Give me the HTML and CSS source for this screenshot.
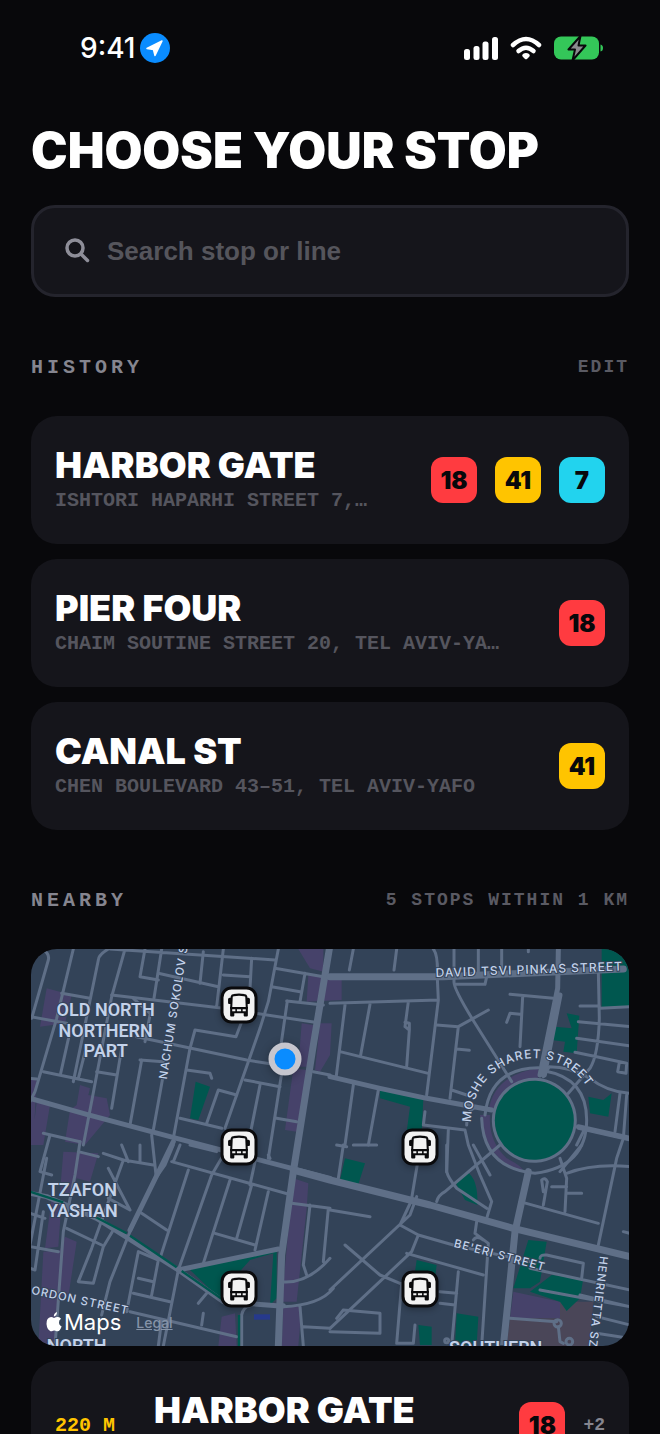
FILE: index.html
```html
<!DOCTYPE html>
<html lang="en">
<head>
    <meta charset="UTF-8">
    <meta name="viewport" content="width=device-width, initial-scale=1.0">
    <title>Choose your stop</title>
    <link rel="stylesheet" href="styles.css">
</head>
<body>
    <div class="status-bar">
        <div class="status-time">
            <span>9:41</span>
            <svg class="location-icon" viewBox="0 0 30 30" aria-hidden="true">
                <circle cx="15" cy="15" r="15" fill="#0a8cff"/>
                <path d="M22 8 L15 22.500 L13.500 16.500 L7 15.500 Z" fill="#fff" stroke="#fff" stroke-width="1.500" stroke-linejoin="round"/>
            </svg>
        </div>
        <div class="status-icons">
            <svg width="34" height="24" viewBox="0 0 34 24" aria-hidden="true" fill="#fff">
                <rect x="0" y="13" width="6" height="11" rx="2.500"/>
                <rect x="9.500" y="10" width="6" height="14" rx="2.500"/>
                <rect x="18.500" y="5.500" width="6" height="18.500" rx="2.500"/>
                <rect x="28" y="1" width="6" height="23" rx="2.500"/>
            </svg>
            <svg width="32" height="24" viewBox="0 0 32 24" aria-hidden="true" fill="none" stroke="#fff" stroke-width="4.500" stroke-linecap="round">
                <path d="M3 9 Q16 -3 29 9"/>
                <path d="M8.500 15 Q16 8.500 23.500 15"/>
                <path d="M16 21.500 L14 19.500 Q16 18 18 19.500 Z" fill="#fff" stroke-width="3.500" stroke-linejoin="round"/>
            </svg>
            <svg width="50" height="26" viewBox="0 0 50 26" aria-hidden="true">
                <rect x="0" y="1.500" width="45" height="23" rx="7" fill="#34c759"/>
                <path d="M46.500 9.500 Q49 10 49 13 Q49 16 46.500 16.500 Z" fill="#34c759"/>
                <path d="M26.500 1 L14.500 14.500 H21 L18.500 25.500 L31.500 10.500 H24.500 Z" fill="#8a8a8e" stroke="#08080b" stroke-width="2" stroke-linejoin="round"/>
            </svg>
        </div>
    </div>

    <main class="page">
        <h1>CHOOSE YOUR STOP</h1>

        <label class="search">
            <svg class="search-icon" viewBox="0 0 26 26" aria-hidden="true" fill="none" stroke="#8e8e99" stroke-width="3.500" stroke-linecap="round">
                <circle cx="10" cy="10" r="8"/>
                <path d="M16 16 L22.500 22.500"/>
            </svg>
            <input type="search" placeholder="Search stop or line" aria-label="Search stop or line">
        </label>

        <div class="section-head">
            <h2>HISTORY</h2>
            <button class="edit-btn" type="button">EDIT</button>
        </div>

        <div class="stop-list">
            <article class="stop-card">
                <div class="stop-info">
                    <h3>HARBOR GATE</h3>
                    <p>ISHTORI HAPARHI STREET 7,…</p>
                </div>
                <div class="lines">
                    <span class="badge red">18</span>
                    <span class="badge yellow">41</span>
                    <span class="badge cyan">7</span>
                </div>
            </article>
            <article class="stop-card">
                <div class="stop-info">
                    <h3>PIER FOUR</h3>
                    <p>CHAIM SOUTINE STREET 20, TEL AVIV-YA…</p>
                </div>
                <div class="lines">
                    <span class="badge red">18</span>
                </div>
            </article>
            <article class="stop-card">
                <div class="stop-info">
                    <h3>CANAL ST</h3>
                    <p>CHEN BOULEVARD 43–51, TEL AVIV-YAFO</p>
                </div>
                <div class="lines">
                    <span class="badge yellow">41</span>
                </div>
            </article>
        </div>

        <div class="section-head">
            <h2>NEARBY</h2>
            <span class="section-note">5 STOPS WITHIN 1 KM</span>
        </div>

        <div class="stop-list">
            <div class="map">
                <svg class="map-canvas" viewBox="3 12 1794 1191" preserveAspectRatio="xMidYMid slice" role="img" aria-label="Map of nearby stops">
                    <rect class="land" x="0" y="0" width="1800" height="1220"/>

                    <!-- built-up blocks -->
                    <g class="block">
                        <path d="M50 130 L125 150 L105 235 L30 245 Z"/>
                        <path d="M0 400 L20 400 L10 600 L0 600 Z M20 470 L60 480 L40 600 L5 600 Z"/>
                        <path d="M150 420 L180 430 L175 450 L230 460 L240 510 L165 600 L105 590 L120 495 L140 480 Z"/>
                        <path d="M805 12 H880 V80 L840 70 Z M835 90 L935 90 V165 L830 170 Z"/>
                        <path d="M815 235 L850 240 L835 365 L805 365 Z M870 235 H905 L900 330 L870 380 L855 375 Z"/>
                        <path d="M790 370 L830 375 L800 560 L765 555 Z"/>
                        <path d="M100 620 L205 625 L180 710 L140 700 L125 755 L90 740 Z"/>
                        <path d="M65 760 L95 765 L85 905 L45 910 Z M105 875 L140 890 L115 1055 H85 L75 1203 H25 L40 920 L90 915 Z"/>
                        <path d="M790 700 L835 715 L830 790 L800 1070 H755 Z M760 1085 H815 L805 1203 H755 Z M575 1115 L615 1105 L620 1203 H565 Z"/>
                        <path d="M1375 500 Q1390 390 1525 370 L1525 400 Q1420 410 1400 500 Z M1350 510 H1380 Q1375 590 1430 640 Q1480 665 1480 680 Q1370 650 1350 510 Z"/>
                        <path d="M1450 1040 L1590 1070 V1120 H1440 Z"/>
                    </g>
                    <path class="campus" d="M1590 1070 L1690 1070 L1680 1203 H1430 L1440 1120 H1590 Z"/>

                    <!-- parks -->
                    <g class="park">
                        <path d="M497 410 L540 425 L505 525 L480 520 Z"/>
                        <circle cx="1513" cy="524" r="124"/>
                        <path d="M1715 12 H1800 V185 L1715 188 Z M1610 205 L1648 212 L1640 325 L1600 320 L1605 290 L1565 285 L1575 245 L1625 250 Z"/>
                        <path d="M1675 455 L1720 465 L1745 445 L1735 515 L1680 505 Z"/>
                        <path d="M1050 435 L1180 462 L1175 560 H1130 L1140 485 L1050 460 Z"/>
                        <path d="M945 640 L1005 655 L985 718 L930 705 Z M1310 680 Q1345 700 1342 780 L1305 765 L1275 710 Z"/>
                        <path d="M1495 885 L1550 890 L1530 1010 L1500 1030 L1450 1030 Z M1565 990 L1660 1000 L1650 1060 L1610 1098 L1590 1070 L1500 1040 Z"/>
                        <path d="M1160 945 L1220 960 L1215 1000 L1155 980 Z M1280 1105 L1345 1115 L1340 1200 H1275 Z M1165 1140 L1205 1145 V1200 H1170 Z"/>
                        <path d="M475 970 L740 915 V1060 L720 1080 L730 925 L660 945 L620 990 L580 1070 Z"/>
                    </g>
                    <rect class="station" x="672" y="1108" width="48" height="16"/>

                    <g class="road">
                        <!-- north west -->
                        <path d="M35 12 Q60 25 55 45 L5 220 M130 12 L80 220 L15 440 L0 470 M235 12 Q205 30 205 45 L130 410 M285 12 L245 155 L160 600 M345 12 L330 95 L385 105 M395 12 L372 160 M240 12 L735 45"/>
                        <path d="M95 145 L180 160 M245 150 L580 190 L855 232 M0 215 L110 235 M520 20 L510 115 M580 12 L560 185 M385 85 L565 125 M580 90 L660 95 M665 40 L660 130"/>
                        <path d="M745 12 L715 170 L690 250 L655 350 L585 550 M735 70 L880 95 M725 125 L810 140 M825 85 L810 170 M770 168 L880 180 M772 168 L750 320 M635 230 L618 275 L495 255 L480 310 L430 580"/>
                        <path d="M320 275 L650 345 L730 358 M470 375 L540 385 L545 400 M40 380 L185 410 M120 260 L92 385 M168 310 L145 400 M200 380 L260 390 M275 310 L245 490 M335 345 L300 540 M330 345 L400 350 M398 400 L370 555"/>
                        <path d="M450 520 L575 550 M530 535 L565 435 L620 450 M645 405 L750 425 M690 420 L660 570 M755 385 L715 640 M740 520 L800 530 M850 380 L900 390 M0 400 L20 402 M40 565 L150 590 M60 570 L30 680 L65 690 M360 210 L345 290 M310 160 L365 210"/>

                        <!-- north east -->
                        <path d="M970 12 L958 75 M1100 12 L1092 75 M1210 12 Q1225 30 1222 100 L1225 165 L1190 450 M900 175 L1225 165 M945 180 L918 400 M1020 178 L992 330 M1135 170 L1125 245 L1138 255 L1130 365 M1138 255 V235 L1125 232 M930 320 L1195 385"/>
                        <path d="M1272 12 V110 Q1270 130 1335 235 L1445 410 M1275 118 H1365 L1370 95 M1345 12 V80 M1415 12 V80 M1495 12 V20 M1220 240 L1285 245 L1375 195 M1285 245 L1260 460 M1280 312 L1318 316 M1265 435 L1310 450"/>
                        <path d="M1440 148 L1570 160 M1478 155 L1470 305 M1470 208 L1440 205 L1430 232 M1705 80 L1708 220 Q1705 330 1680 370 L1615 445 M1650 183 H1708 M1710 190 L1800 185 M1645 230 L1800 245 M1640 280 L1800 303 M1635 322 L1700 335 L1790 355 L1788 385 L1763 380 L1768 352 M1540 395 L1558 365 Q1620 365 1680 400 Q1730 440 1800 445"/>
                        <path d="M1365 510 Q1380 370 1525 368 M1545 378 Q1670 400 1670 525 Q1670 665 1515 685 Q1360 670 1355 520 M1185 500 L1180 540 L1305 555 L1315 600 L1350 690 L1385 770 L1370 820 M1310 540 Q1310 500 1330 490 M970 420 L945 600 M1045 435 L1015 600 M1255 555 L1250 680 Q1255 700 1280 730 L1370 790"/>
                        <path d="M1390 525 A123 123 0 1 1 1390 527 M1645 550 L1800 585 M1660 560 L1640 600 M1770 445 L1755 560 M1790 450 L1780 580 L1760 640 L1705 900"/>

                        <!-- south west -->
                        <path d="M150 590 L135 690 L100 860 L75 1203 M220 625 L280 645 L370 660 M275 600 L295 650 M330 600 V650 M365 570 L378 690 M280 645 L185 910 L145 1010 L190 1015 L220 905 L250 855 M235 670 L300 795 L235 760 M145 620 L205 635 M50 640 L0 900"/>
                        <path d="M430 600 L405 660 L370 710 L300 860 L240 1010 L215 1110 M425 650 L785 750 M475 675 L390 940 M545 690 L445 975 L400 1203 M600 705 L520 955 M665 720 L620 880 M715 740 L675 915 M335 805 L410 855 M555 865 L675 900 M580 630 L545 690 M720 640 L715 630 M675 650 L660 720"/>
                        <path d="M0 805 L45 820 M110 850 L215 900 M0 905 L85 920 M0 970 L15 975 L40 800 M325 920 L290 1100 M325 920 L385 945 L365 1050 M325 1000 L370 1010 M310 1045 L420 1070 M300 1100 L620 1175 M520 1105 L515 1140 M530 1045 L505 1075 M395 1125 L385 1203 M480 600 L560 620 M450 600 L430 650"/>
                        <path d="M785 775 L900 790 M840 780 L820 960 L830 990 M895 790 L880 950 M750 1010 Q830 1020 900 940 M760 1085 Q870 1080 910 1030 M810 1085 L820 1203 M820 1145 L900 1150 M635 1203 V1110 Q640 1085 660 1082"/>

                        <!-- south east -->
                        <path d="M940 600 L925 700 M1160 755 L1140 810 L900 1035 M900 795 L1020 815 M1165 640 L1145 760 M1145 765 L1110 840 L1165 870 L1270 900 L1500 950 M1165 870 L1145 920 L900 1150 M945 900 L1050 990 L1110 1015 M1130 925 L1360 990 M920 600 L950 605 M970 600 L1040 600"/>
                        <path d="M1220 770 Q1225 750 1245 740 L1410 600 M1330 600 L1380 690 M1250 600 V680 M1340 830 L1335 865 L1375 895 L1355 1203 M1330 885 Q1340 870 1360 885 M1285 980 L1265 1200 M1230 1040 L1280 1045 M1230 1075 L1275 1080 M940 1095 L1050 1105 V1165 L900 1160 M940 1095 L920 1120 M1115 1015 L1100 1195 H1150 L1155 1140"/>
                        <path d="M1470 770 L1705 835 M1590 640 L1610 700 L1605 800 M1610 685 Q1690 655 1800 665 M1540 780 L1552 710 Q1545 695 1535 705 L1540 740 M1565 725 H1610 M1610 745 H1655 M1655 600 L1590 680 M1780 860 L1800 865"/>
                        <path d="M1530 940 Q1530 928 1550 930 L1660 955 L1655 1000 M1500 970 L1800 1035 M1530 1035 L1800 1085 M1650 1050 L1800 1085 M1700 1115 L1800 1140 M1700 1165 L1800 1180 M1440 1120 L1580 1130 M1585 1145 L1590 1190 L1600 1195"/>
                        <circle cx="1583" cy="1135" r="11"/>
                        <circle cx="1618" cy="1190" r="10"/>
                        <circle cx="1250" cy="1187" r="6"/>
                    </g>

                    <g class="road avenue">
                        <path d="M0 460 L170 508 L440 580 L900 700"/>
                        <path d="M0 745 L50 755 L200 820 L445 975 L580 1070 L740 1082 L760 1082"/>
                        <path d="M900 395 L1050 430 L1190 460 L1385 495 M445 975 L745 912 M1585 15 L1583 130 L1530 390 M1590 150 L1543 390 M1645 545 L1800 580"/>
                        <path d="M300 855 L430 590"/>
                    </g>
                    <g class="road boulevard">
                        <path d="M898 12 L885 90 L850 300 L790 680 L755 930 L745 1203"/>
                        <path d="M900 95 L1240 95 L1780 72"/>
                        <path d="M790 675 L900 705 L1200 780 L1450 850 L1800 935"/>
                        <path d="M1495 680 L1455 860 L1435 1060 L1420 1203"/>
                    </g>
                    <path class="median" d="M0 740 L100 772 M195 815 L290 865 M300 872 L440 967 M455 978 L580 1065 M627 1203 V1110"/>

                    <path id="sharet" fill="none" d="M1323 532 A190 190 0 0 1 1703 527"/>

                    <g class="area-label">
                        <text x="227" y="214">OLD NORTH</text>
                        <text x="227" y="275">NORTHERN</text>
                        <text x="227" y="336">PART</text>
                        <text x="157" y="754">TZAFON</text>
                        <text x="157" y="815">YASHAN</text>
                        <text x="140" y="1222">NORTH</text>
                        <text x="1397" y="1226">SOUTHERN</text>
                    </g>
                    <g class="street-label">
                        <text transform="translate(1217 96) rotate(-2)">DAVID TSVI PINKAS STREET</text>
                        <text><textPath href="#sharet">MOSHE SHARET STREET</textPath></text>
                    </g>
                    <g class="street-label small">
                        <text transform="translate(410 404) rotate(-81)">NACHUM SOKOLOV ST</text>
                        <text transform="translate(1270 905) rotate(15)">BE'ERI STREET</text>
                        <text transform="translate(1710 932) rotate(97)">HENRIETTA SZOLD</text>
                        <text transform="translate(2 1046) rotate(12)">ORDON STREET</text>
                    </g>
                </svg>

                <span class="me"></span>
                <button class="pin pin-1" type="button" aria-label="Bus stop"><svg viewBox="0 0 24 24"><use href="#bus"/></svg></button>
                <button class="pin pin-2" type="button" aria-label="Bus stop"><svg viewBox="0 0 24 24"><use href="#bus"/></svg></button>
                <button class="pin pin-3" type="button" aria-label="Bus stop"><svg viewBox="0 0 24 24"><use href="#bus"/></svg></button>
                <button class="pin pin-4" type="button" aria-label="Bus stop"><svg viewBox="0 0 24 24"><use href="#bus"/></svg></button>
                <button class="pin pin-5" type="button" aria-label="Bus stop"><svg viewBox="0 0 24 24"><use href="#bus"/></svg></button>

                <div class="map-credit">
                    <span class="map-brand">
                        <svg viewBox="0 0 16 20" aria-hidden="true" fill="#fff">
                            <path d="M11 0 Q11 3.800 7.800 4.600 Q7.700 1.200 11 0 Z"/>
                            <path d="M8 6 Q10 4.800 12 5 Q14 5.200 15 6.700 Q12.700 8.200 13 11 Q13.200 13.500 15.600 14.500 Q14 19 11.700 19.300 Q10.500 19.300 9.500 18.700 Q8.300 18.200 7 18.700 Q5.500 19.500 4.500 19.200 Q1 17.500 0.500 12 Q0.400 5.500 5 5 Q6.500 5 8 6 Z"/>
                        </svg>
                        Maps
                    </span>
                    <a href="#legal">Legal</a>
                </div>
            </div>

            <article class="stop-card nearby">
                <span class="distance">220 M</span>
                <div class="stop-info">
                    <h3>HARBOR GATE</h3>
                    <p>ISHTORI HAPARHI…</p>
                </div>
                <div class="lines">
                    <span class="badge red">18</span>
                    <span class="more">+2</span>
                </div>
            </article>
        </div>
    </main>

    <svg class="symbols" aria-hidden="true">
        <symbol id="bus" viewBox="0 0 24 24">
            <path d="M5 4 Q5.200 2.800 7 2.500 Q12 1.500 17 2.500 Q18.800 2.800 19 4 L19.500 15 H4.500 Z" fill="none" stroke="#0a0a0c" stroke-width="2" stroke-linejoin="round"/>
            <path d="M3.500 14 H20.500 V22 Q20.500 23 19.500 23 H17.500 Q16.500 23 16.500 22 V20 H7.500 V22 Q7.500 23 6.500 23 H4.500 Q3.500 23 3.500 22 Z" fill="#0a0a0c"/>
            <path d="M4.500 5 H3 Q1.500 5 1.500 6.500 V10 Q1.500 11 2.500 11 H4.500 Z M19.500 5 H21 Q22.500 5 22.500 6.500 V10 Q22.500 11 21.500 11 H19.500 Z" fill="#0a0a0c"/>
            <path d="M5.500 16 H8.500 V18 H5.500 Z M10 16 H14 V18 H10 Z M15.500 16 H18.500 V18 H15.500 Z" fill="#f2f2f2"/>
        </symbol>
    </svg>
</body>
</html>
```
FILE: styles.css
```css
* {
    box-sizing: border-box;
}

body {
    margin: 0;
    background-color: #08080b;
    color: #fff;
    font-family: Inter, "Liberation Sans", sans-serif;
    overflow: hidden;
    height: 100vh;
}

h1, h2, h3, p {
    margin: 0;
}

button {
    padding: 0;
    border: none;
    background: none;
    cursor: pointer;
}

.symbols {
    display: none;
}

.status-bar {
    display: flex;
    justify-content: space-between;
    align-items: center;
    height: 96px;
    padding: 0 56px 0 80px;
}

.status-time {
    display: flex;
    align-items: center;
    gap: 5px;
    font-size: 28px;
    font-weight: 500;
}

.location-icon {
    width: 30px;
    height: 30px;
}

.status-icons {
    display: flex;
    align-items: center;
    gap: 12px;
}

.page {
    padding: 23px 31px 0;
}

h1 {
    font-size: 49px;
    line-height: 64px;
    font-weight: 900;
    white-space: nowrap;
}

.search {
    display: flex;
    align-items: center;
    gap: 16px;
    height: 92px;
    margin-top: 22px;
    padding: 0 31px;
    background: #15151b;
    border: 3px solid #24242d;
    border-radius: 24px;
}

.search-icon {
    flex: none;
    width: 26px;
    height: 26px;
}

.search input {
    flex: 1;
    min-width: 0;
    padding: 0;
    border: none;
    outline: none;
    background: none;
    color: #fff;
    font-family: "Liberation Sans", Arial, sans-serif;
    font-size: 26px;
    font-weight: bold;
}

.search input::placeholder {
    color: #55555c;
    opacity: 1;
}

.section-head {
    display: flex;
    justify-content: space-between;
    align-items: center;
    height: 24px;
    margin: 58px 0 37px;
    font-family: "Liberation Mono", monospace;
}

h2 {
    font-size: 20px;
    font-weight: bold;
    letter-spacing: 4px;
    color: #85858f;
}

.edit-btn, .section-note {
    font-family: "Liberation Mono", monospace;
    font-size: 18px;
    font-weight: bold;
    letter-spacing: 2px;
    color: #5a5a63;
}

.stop-list {
    display: flex;
    flex-direction: column;
    gap: 15px;
}

.stop-card {
    display: flex;
    align-items: center;
    gap: 24px;
    min-height: 128px;
    padding: 24px;
    background: #15151b;
    border-radius: 26px;
}

.stop-info {
    flex: 1;
    min-width: 0;
    padding-bottom: 2px;
}

h3 {
    font-size: 36px;
    line-height: 44px;
    font-weight: 900;
    white-space: nowrap;
}

.stop-info p {
    font-family: "Liberation Mono", monospace;
    font-size: 20px;
    line-height: 28px;
    font-weight: bold;
    color: #55555e;
    white-space: nowrap;
    overflow: hidden;
    text-overflow: ellipsis;
}

.lines {
    display: flex;
    align-items: center;
    gap: 18px;
}

.badge {
    display: flex;
    align-items: center;
    justify-content: center;
    width: 46px;
    height: 46px;
    border-radius: 12px;
    color: #08080b;
    font-size: 24px;
    font-weight: 900;
}

.red {
    background: #ff3b40;
}

.yellow {
    background: #ffc400;
}

.cyan {
    background: #22d3ee;
}

.map {
    position: relative;
    aspect-ratio: 598 / 397;
    border-radius: 26px;
    overflow: hidden;
}

.map-canvas {
    display: block;
    width: 100%;
    height: 100%;
}

.land {
    fill: #334358;
}

.block {
    fill: #46426a;
}

.campus {
    fill: #4a4658;
}

.park {
    fill: #00574f;
}

.station {
    fill: #26398c;
}

.road {
    fill: none;
    stroke: #5f6f87;
    stroke-width: 9;
    stroke-linejoin: round;
    stroke-linecap: round;
}

.avenue {
    stroke-width: 15;
}

.boulevard {
    stroke-width: 21;
}

.median {
    fill: none;
    stroke: #00574f;
    stroke-width: 7;
}

.area-label {
    fill: #c3d2ea;
    font-family: Roboto, sans-serif;
    font-size: 54px;
    font-weight: 600;
    text-anchor: middle;
    paint-order: stroke;
    stroke: #334358;
    stroke-width: 6px;
}

.street-label {
    fill: #c3d2ea;
    font-family: Inter, sans-serif;
    font-size: 36px;
    font-weight: 500;
    letter-spacing: 3px;
    paint-order: stroke;
    stroke: #334358;
    stroke-width: 6px;
}

.street-label.small {
    font-size: 34px;
}

.me, .pin {
    position: absolute;
    transform: translate(-50%, -50%);
}

.me {
    left: 42.4%;
    top: 27.6%;
    width: 33px;
    height: 33px;
    border: 6px solid #c6c6ce;
    border-radius: 50%;
    background: #0a8cff;
    box-shadow: 0 2px 10px rgba(0, 0, 0, 0.3);
}

.pin {
    display: flex;
    align-items: center;
    justify-content: center;
    width: 37px;
    height: 37px;
    border: 3px solid #0a0a0c;
    border-radius: 11px;
    background: #f2f2f2;
    box-shadow: 0 2px 6px rgba(0, 0, 0, 0.3);
}

.pin svg {
    flex: none;
    width: 25px;
    height: 25px;
}

.pin-1 {
    left: 34.8%;
    top: 14.2%;
}

.pin-2 {
    left: 34.8%;
    top: 49.8%;
}

.pin-3 {
    left: 65%;
    top: 49.8%;
}

.pin-4 {
    left: 34.8%;
    top: 85.6%;
}

.pin-5 {
    left: 65%;
    top: 85.6%;
}

.map-credit {
    position: absolute;
    left: 15px;
    bottom: 10px;
    display: flex;
    align-items: center;
    gap: 15px;
}

.map-brand {
    display: flex;
    align-items: center;
    gap: 2px;
    font-size: 22px;
    line-height: 28px;
}

.map-brand svg {
    width: 16px;
    height: 20px;
}

.map-credit a {
    color: #8593a8;
    font-size: 14px;
    font-weight: 500;
}

.nearby {
    gap: 39px;
}

.distance {
    font-family: "Liberation Mono", monospace;
    font-size: 20px;
    font-weight: bold;
    color: #ffc400;
}

.more {
    font-family: "Liberation Mono", monospace;
    font-size: 18px;
    font-weight: bold;
    color: #85858f;
}
```
